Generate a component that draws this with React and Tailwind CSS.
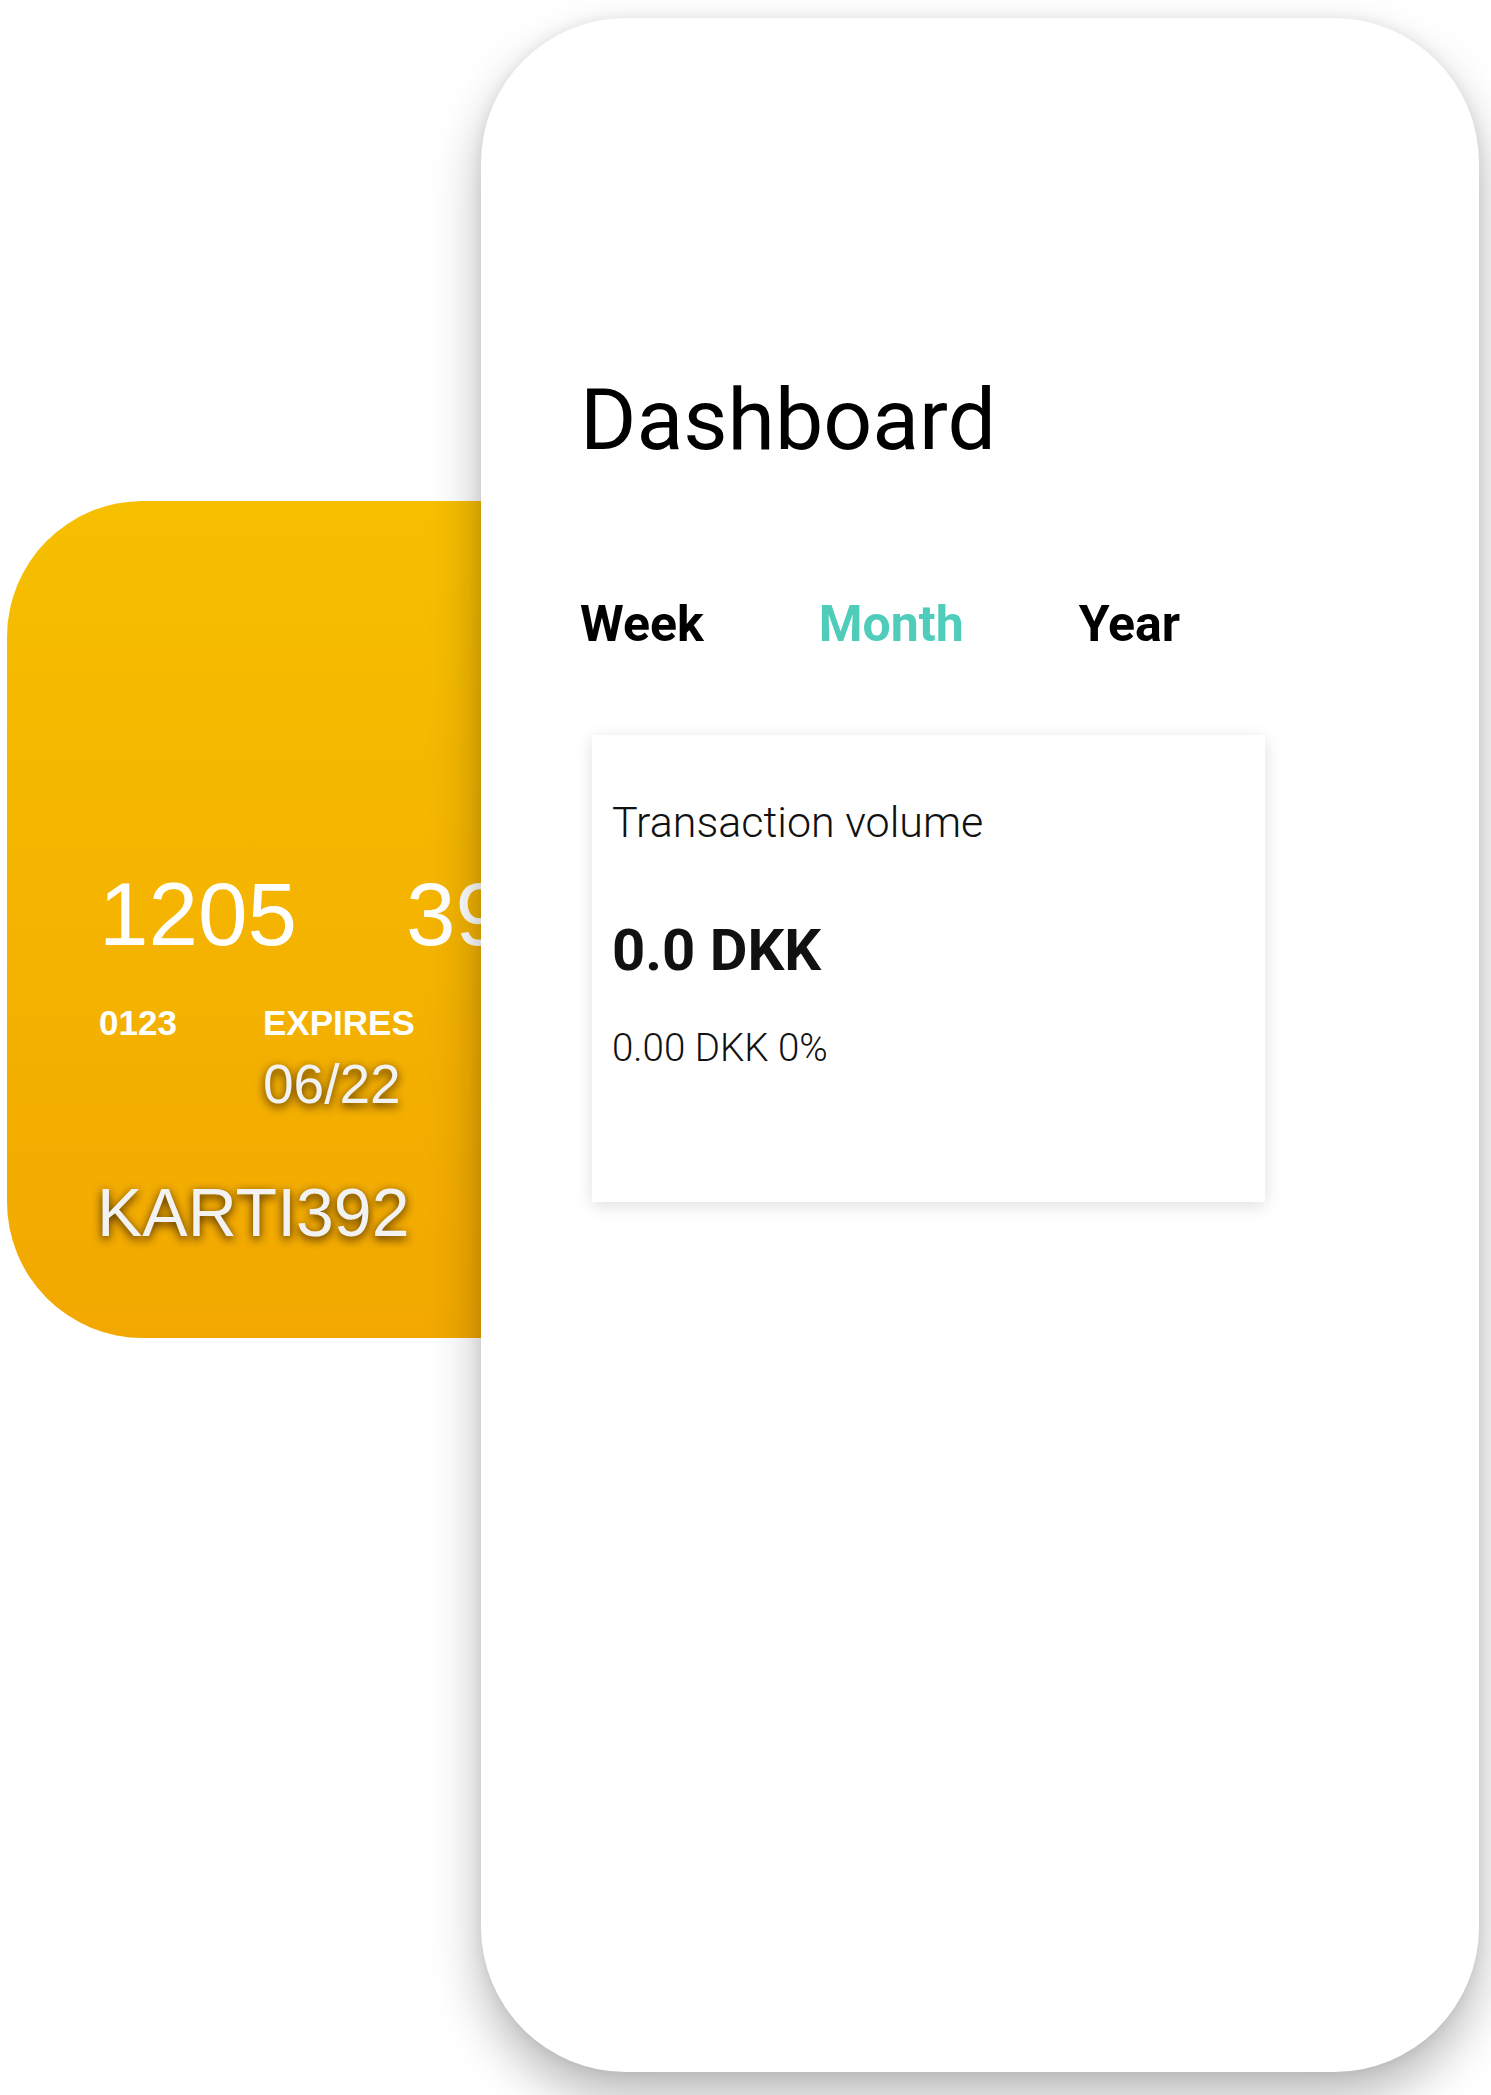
import React from 'react';

const tabs = [
    { label: 'Week', active: false },
    { label: 'Month', active: true },
    { label: 'Year', active: false },
];

const App = () => {
    return (
        <div className="relative w-[1491px] h-[2095px] bg-white overflow-hidden">
            {/* Payment card (sits behind the phone) */}
            <div className="absolute left-[7px] top-[501px] w-[780px] h-[837px] rounded-[136px] overflow-hidden bg-gradient-to-b from-[#f6bf00] to-[#f2a800] pl-[92px] pt-[369px] font-['Liberation_Sans',Arial,sans-serif] text-white">
                <div className="flex gap-[109px] text-[89px] leading-[89px] whitespace-nowrap">
                    <span>1205</span>
                    <span>3914</span>
                    <span>5521</span>
                </div>
                <div className="flex mt-[44px]">
                    <div className="w-[164px] text-[35px] leading-[40px] font-bold">0123</div>
                    <div className="flex flex-col">
                        <span className="text-[35px] leading-[40px] font-bold">EXPIRES</span>
                        <span className="mt-[11px] text-[55px] leading-[60px] text-[#f2f2f2] [text-shadow:0_3px_10px_rgba(50,25,0,0.95)]">06/22</span>
                    </div>
                </div>
                <div className="mt-[60px] -ml-[2px] text-[68px] leading-[76px] text-[#f2f2f2] [text-shadow:0_3px_10px_rgba(50,25,0,0.95)]">KARTI392</div>
            </div>

            {/* Phone screen */}
            <div className="absolute left-[481px] top-[18px] w-[998px] h-[2054px] rounded-[145px] bg-white shadow-[0_25px_50px_rgba(0,0,0,0.28),0_0_14px_rgba(0,0,0,0.08)] pl-[99px] pt-[352px] font-['Roboto',sans-serif] text-black">
                <h1 className="text-[86px] leading-[100px] font-normal">Dashboard</h1>

                <div className="flex gap-[115px] mt-[125px]">
                    {tabs.map((t) => (
                        <span
                            key={t.label}
                            className={`text-[50px] leading-[59px] font-bold ${t.active ? 'text-[#4fcdba]' : 'text-black'}`}
                        >
                            {t.label}
                        </span>
                    ))}
                </div>

                {/* Transaction volume card */}
                <div className="ml-[12px] mt-[81px] w-[673px] h-[467px] bg-white shadow-[0_4px_16px_rgba(0,0,0,0.13)] pl-[20px] pt-[61px] text-[#111]">
                    <p className="text-[43px] leading-[52px] font-light">Transaction volume</p>
                    <p className="mt-[68px] text-[58px] leading-[68px] font-bold">0.0 DKK</p>
                    <p className="mt-[41px] text-[38.5px] leading-[45px] font-light">0.00 DKK 0%</p>
                </div>
            </div>
        </div>
    );
};

export default App;
